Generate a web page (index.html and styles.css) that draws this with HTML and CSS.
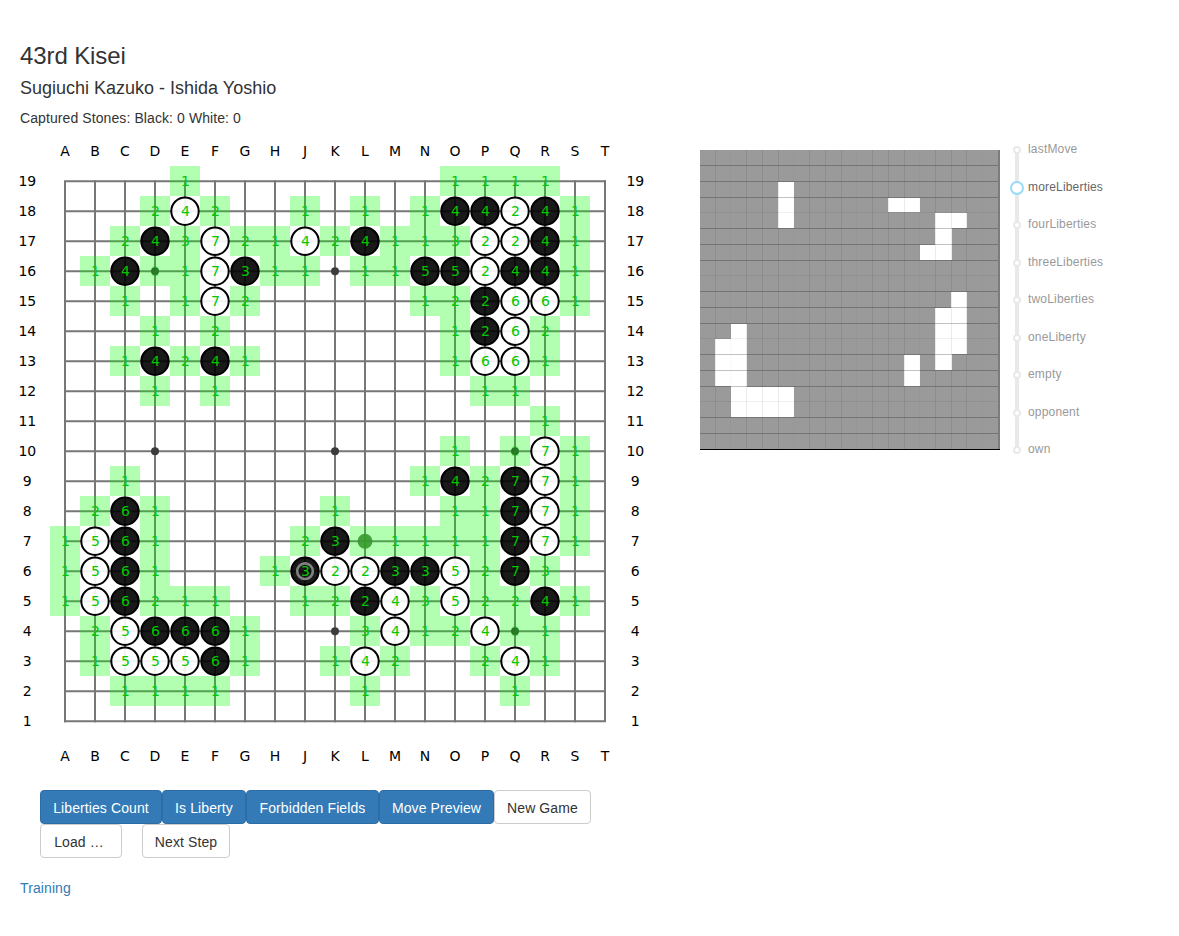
FILE: index.html
```html
<!DOCTYPE html>
<html lang="en">
<head>
<meta charset="utf-8">
<title>43rd Kisei</title>
<link rel="stylesheet" href="styles.css">
</head>
<body>
<main class="page">
  <section class="game">
    <h3 class="title">43rd Kisei</h3>
    <h4 class="players">Sugiuchi Kazuko - Ishida Yoshio</h4>
    <p class="captured">Captured Stones: Black: 0 White: 0</p>
    <svg class="board" id="board" width="660" height="640" viewBox="0 130 660 640"></svg>
    <div class="controls">
      <div class="row">
        <button class="btn primary w122">Liberties Count</button>
        <button class="btn primary w84">Is Liberty</button>
        <button class="btn primary w133">Forbidden Fields</button>
        <button class="btn primary w115">Move Preview</button>
        <button class="btn w97">New Game</button>
      </div>
      <div class="row">
        <button class="btn w82 load">Load …</button>
        <button class="btn w88 next">Next Step</button>
      </div>
    </div>
    <a class="training">Training</a>
  </section>
  <aside class="features">
    <svg class="plane" id="plane" width="300" height="300" shape-rendering="crispEdges"></svg>
    <div class="slider">
      <div class="step"><i class="dot"></i><span>lastMove</span></div>
      <div class="step active"><i class="dot"></i><span>moreLiberties</span></div>
      <div class="step"><i class="dot"></i><span>fourLiberties</span></div>
      <div class="step"><i class="dot"></i><span>threeLiberties</span></div>
      <div class="step"><i class="dot"></i><span>twoLiberties</span></div>
      <div class="step"><i class="dot"></i><span>oneLiberty</span></div>
      <div class="step"><i class="dot"></i><span>empty</span></div>
      <div class="step"><i class="dot"></i><span>opponent</span></div>
      <div class="step"><i class="dot"></i><span>own</span></div>
    </div>
  </aside>
</main>
<script src="board.js"></script>
</body>
</html>
```
FILE: styles.css
```css
* { box-sizing: border-box; }
body { margin: 0; background: #fff; color: #333; font: 14px/20px "Liberation Sans", Arial, sans-serif; }
.page { display: flex; height: 936px; overflow: hidden; }
.game { width: 700px; padding-top: 43px; }
.title, .players { margin: 0 0 0 20px; font-weight: 400; line-height: 1.1; }
.title { font-size: 24px; height: 36px; letter-spacing: -.1px; }
.players { font-size: 18px; height: 29px; }
.captured { margin: 0 0 2px 20px; letter-spacing: .09px; }
.board { display: block; }
.board text { font: 14px "DejaVu Sans", sans-serif; text-anchor: middle; }
.grid { stroke: #777; stroke-width: 2; }
.star { fill: #3c3c3c; }
.liberty { fill: #0f0; fill-opacity: .3; }
.stone { stroke: #000; stroke-width: 2; fill-opacity: .9; }
.black { fill: #000; }
.white { fill: #fff; }
.last { fill: none; stroke: #808080; stroke-width: 2.6; }
.preview { fill: #3c9632; fill-opacity: .9; }
.board .count { fill: #00c800; }
.board .covered { fill-opacity: .3; }
.controls { margin: 20px 0 0 40px; }
.row { display: flex; }
.btn { height: 34px; padding: 2px 0 0; border: 1px solid #ccc; border-radius: 4px; background: #fff; color: #333; font: inherit; letter-spacing: .1px; white-space: nowrap; }
.primary { background: #337ab7; border-color: #2e6da4; color: #fff; }
.w122 { width: 122px; }
.w84 { width: 84px; }
.w133 { width: 133px; }
.w115 { width: 115px; }
.w97 { width: 97px; }
.w82 { width: 82px; }
.w88 { width: 88px; }
.load { padding-right: 4px; }
.next { margin-left: 20px; }
.training { display: block; margin: 20px 0 0 20px; color: #337ab7; letter-spacing: .1px; }
.features { display: flex; padding-top: 150px; }
.plane { display: block; }
.seam-h { fill: #000; fill-opacity: .24; }
.seam-v { fill: #000; fill-opacity: .08; }
.faint { fill-opacity: .06; }
.seam-v.faint { fill-opacity: .02; }
.slider { margin: -19px 0 0 11px; width: 120px; height: 337.5px; background: linear-gradient(#e9e9e9, #e9e9e9) 4px 19px / 4px 300px no-repeat; }
.step { display: flex; align-items: center; height: 37.5px; font-size: 12px; line-height: 18px; color: #999; gap: 7px; letter-spacing: .18px; }
.step:nth-child(even) { padding-top: 1px; }
.dot { width: 8px; height: 8px; margin: 0 0 0 2px; border: 2px solid #e9e9e9; border-radius: 50%; background: #fff; }
.step span { margin-top: -2px; }
.active { color: #666; gap: 4px; }
.active .dot { width: 14px; height: 14px; margin-left: -1px; border-color: #96dbfa; }
```
FILE: board.js
```js
const rows = [
  '...................',
  '....O........XXOX..',
  '...X.O..O.X...OOX..',
  '..X..OX.....XXOXX..',
  '.....O........XOO..',
  '..............XO...',
  '...X.X........OO...',
  '...................',
  '...................',
  '................O..',
  '.............X.XO..',
  '..X............XO..',
  '.OX......X.....XO..',
  '.OX.....XOOXXO.X...',
  '.OX.......XO.O..X..',
  '..OXXX.....O..O....',
  '..OOOX....O....O...',
  '...................',
  '...................'
];

const N = 19;
const letters = 'ABCDEFGHJKLMNOPQRST';
const X = c => 65 + 30 * c;
const Y = r => 181.2 + 30 * r;
const near = (r, c) => [[r - 1, c], [r + 1, c], [r, c - 1], [r, c + 1]]
  .filter(([a, b]) => a >= 0 && b >= 0 && a < N && b < N);

function liberties(r, c) {
  const seen = new Set([r * N + c]), free = new Set(), queue = [[r, c]];
  while (queue.length) {
    const [a, b] = queue.pop();
    for (const [p, q] of near(a, b)) {
      if (rows[p][q] === '.') free.add(p * N + q);
      else if (rows[p][q] === rows[r][c] && !seen.has(p * N + q)) {
        seen.add(p * N + q);
        queue.push([p, q]);
      }
    }
  }
  return free.size;
}

let out = '';
for (let i = 0; i < N; i++) {
  out += `<path class="grid" d="M${X(i)} ${Y(0) - 1}V${Y(18) + 1}M${X(0) - 1} ${Y(i)}H${X(18) + 1}"/>`;
  out += `<text x="${X(i)}" y="156">${letters[i]}</text><text x="${X(i)}" y="761">${letters[i]}</text>`;
  out += `<text x="27.3" y="${186 + 30 * i}">${19 - i}</text><text x="635.3" y="${186 + 30 * i}">${19 - i}</text>`;
}
const isStar = (r, c) => r % 6 === 3 && c % 6 === 3;
for (const r of [3, 9, 15]) for (const c of [3, 9, 15])
  out += `<circle class="star" cx="${X(c)}" cy="${Y(r)}" r="4"/>`;

for (let r = 0; r < N; r++) for (let c = 0; c < N; c++) {
  const stone = rows[r][c];
  const preview = r === 12 && c === 10;
  let count;
  if (stone === '.') {
    count = near(r, c).filter(([a, b]) => rows[a][b] !== '.').length;
    if (!count) continue;
    out += `<rect class="liberty" x="${X(c) - 15}" y="${Y(r) - 15.2}" width="30" height="30"/>`;
    if (preview) out += `<circle class="preview" cx="${X(c)}" cy="${Y(r)}" r="7.5"/>`;
  } else {
    count = liberties(r, c);
    out += `<circle class="stone ${stone === 'X' ? 'black' : 'white'}" cx="${X(c)}" cy="${Y(r)}" r="13.7"/>`;
    if (r === 13 && c === 8) out += `<circle class="last" cx="${X(c)}" cy="${Y(r)}" r="7.8"/>`;
  }
  const covered = stone === '.' && (preview || isStar(r, c)) ? ' covered' : '';
  out += `<text class="count${covered}" x="${X(c) + .4}" y="${186 + 30 * r}">${count}</text>`;
}
document.getElementById('board').innerHTML = out;

const vs = [15, 30, 46, 62, 78, 93, 109, 125, 141, 156, 172, 188, 204, 219, 235, 251, 266, 282, 298];
const hs = [15, 31, 47, 62, 78, 94, 110, 125, 141, 157, 173, 188, 204, 220, 236, 251, 267, 283, 299];
let p = '<rect width="300" height="300" fill="#9a9a9a"/>';
for (let r = 0; r < N; r++) for (let c = 0; c < N; c++) {
  if (rows[r][c] === '.' || liberties(r, c) < 5) continue;
  const x = vs[c - 1] + (c % 4 === 2 ? 1 : 0), y = hs[r - 1] + 1;
  const h = hs[r] - y + (rows[r + 1][c] !== '.' && liberties(r + 1, c) >= 5 ? 1 : 0);
  p += `<rect x="${x}" y="${y}" width="${vs[c] - x + 1}" height="${h}" fill="#fff"/>`;
}
for (let i = 0; i < 18; i++) {
  p += `<rect class="seam-h${i % 4 === 3 ? ' faint' : ''}" y="${hs[i]}" width="300" height="1"/>`;
  p += `<rect class="seam-v${i % 4 === 1 ? ' faint' : ''}" x="${vs[i]}" width="1" height="300"/>`;
}
p += '<rect x="298" width="2" height="300" fill="#7c7c7c"/><rect y="299" width="300" height="1" fill="#000"/>';
document.getElementById('plane').innerHTML = p;
```
